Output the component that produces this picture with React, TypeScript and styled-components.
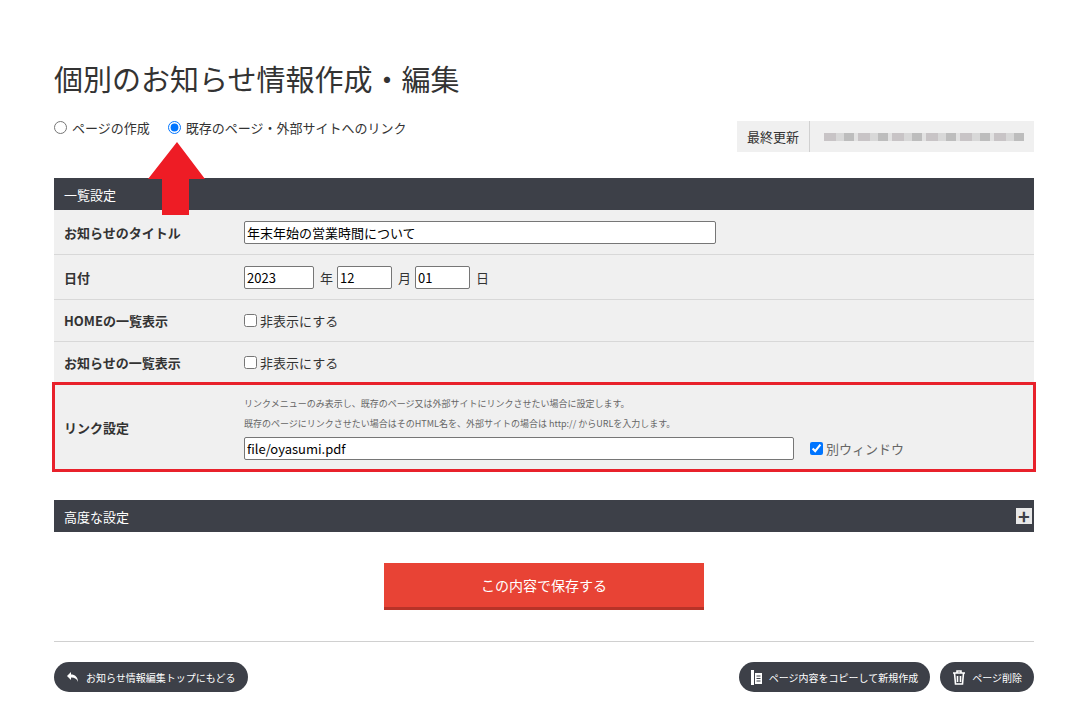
import React from 'react';
import styled, { createGlobalStyle } from 'styled-components';

const Global = createGlobalStyle`
  body { margin: 0; background: #fff; font-family: "Noto Sans CJK JP", "Noto Sans", sans-serif; color: #333; }
`;

const Page = styled.div`
  width: 980px;
  margin: 0 0 0 54px;
  padding: 56px 0 0 0;
  position: relative;
`;

const Title = styled.h1`
  font-size: 29px;
  font-weight: 400;
  margin: 0 0 16px 0;
  line-height: 44px;
  color: #333;
`;

const TopRow = styled.div`
  display: flex;
  justify-content: space-between;
  align-items: flex-start;
  height: 62px;
`;

const Radios = styled.div`
  display: flex;
  gap: 18px;
  font-size: 13px;
  padding-top: 2px;
  label { display: flex; align-items: center; gap: 3px; }
  input { margin: 0 2px 0 0; width: 13px; height: 13px; }
`;

const Updated = styled.div`
  display: flex;
  align-items: center;
  background: #f0f0f0;
  height: 31px;
  width: 297px;
  margin-top: 5px;
  font-size: 13px;
`;

const UpdatedLabel = styled.div`
  padding: 0 10px;
  border-right: 1px solid #d0d0d0;
  height: 100%;
  display: flex;
  align-items: center;
`;

const Blur = styled.div`
  margin-left: 14px;
  height: 8px;
  width: 200px;
  background: repeating-linear-gradient(90deg, #c8c4c6 0 12px, #d8d8d8 12px 20px, #bdbdbd 20px 30px, #e2e2e2 30px 34px);
  filter: blur(0.6px);
`;

const SectionHead = styled.div`
  background: #3d4048;
  color: #fff;
  font-size: 13px;
  height: 32px;
  display: flex;
  align-items: center;
  justify-content: space-between;
  padding: 0 2px 0 10px;
`;

const Row = styled.div<{ $h: number; $hl?: boolean }>`
  display: flex;
  align-items: center;
  background: #f0f0f0;
  min-height: ${p => p.$h}px;
  border-bottom: 1px solid #d8d8d8;
  box-sizing: border-box;
  ${p => p.$hl && `outline: 3px solid #e8212b; outline-offset: -1px; border-bottom: none;`}
`;

const Label = styled.div`
  width: 190px;
  box-sizing: border-box;
  padding-left: 10px;
  font-size: 13px;
  font-weight: 700;
  color: #333;
`;

const Field = styled.div`
  flex: 1;
  display: flex;
  align-items: center;
  gap: 4px;
  font-size: 13px;
`;

const TextInput = styled.input<{ $w: number }>`
  width: ${p => p.$w}px;
  height: 23px;
  box-sizing: border-box;
  border: 1px solid #767676;
  border-radius: 2px;
  font-size: 13px;
  font-family: inherit;
  padding: 0 2px;
  margin-right: 2px;
`;

const Check = styled.label`
  display: flex;
  align-items: center;
  gap: 3px;
  input { margin: 0; width: 13px; height: 13px; }
`;

const Notes = styled.div`
  flex: 1;
  display: flex;
  flex-direction: column;
  font-size: 9px;
  color: #666;
  gap: 7px;
  padding: 10px 0 8px;
`;

const Plus = styled.div`
  width: 16px;
  height: 16px;
  background: #e8e8e8;
  color: #3d4048;
  font-size: 20px;
  font-weight: 700;
  line-height: 16px;
  text-align: center;
`;

const SaveWrap = styled.div`
  display: flex;
  justify-content: center;
  padding: 31px 0 31px;
  border-bottom: 1px solid #d0d0d0;
`;

const Save = styled.button`
  width: 320px;
  height: 47px;
  background: #e84335;
  border: none;
  border-bottom: 3px solid #b73328;
  color: #fff;
  font-size: 14px;
  font-family: inherit;
`;

const Footer = styled.div`
  display: flex;
  justify-content: space-between;
  padding-top: 20px;
`;

const Pill = styled.button`
  height: 30px;
  border-radius: 15px;
  background: #3d4048;
  color: #fff;
  border: none;
  font-family: inherit;
  font-size: 10px;
  display: flex;
  align-items: center;
  gap: 6px;
  padding: 0 12px;
`;

const Arrow = styled.svg`
  position: absolute;
  left: 94px;
  top: 142px;
`;

export default function App() {
  return (
    <>
      <Global />
      <Page>
        <Title>個別のお知らせ情報作成・編集</Title>
        <TopRow>
          <Radios>
            <label><input type="radio" name="m" />ページの作成</label>
            <label><input type="radio" name="m" defaultChecked />既存のページ・外部サイトへのリンク</label>
          </Radios>
          <Updated>
            <UpdatedLabel>最終更新</UpdatedLabel>
            <Blur />
          </Updated>
        </TopRow>
        <SectionHead>一覧設定</SectionHead>
        <Row $h={45}>
          <Label>お知らせのタイトル</Label>
          <Field><TextInput $w={472} defaultValue="年末年始の営業時間について" /></Field>
        </Row>
        <Row $h={45}>
          <Label>日付</Label>
          <Field>
            <TextInput $w={70} defaultValue="2023" />年
            <TextInput $w={55} defaultValue="12" />月
            <TextInput $w={55} defaultValue="01" />日
          </Field>
        </Row>
        <Row $h={42}>
          <Label>HOMEの一覧表示</Label>
          <Field><Check><input type="checkbox" />非表示にする</Check></Field>
        </Row>
        <Row $h={42}>
          <Label>お知らせの一覧表示</Label>
          <Field><Check><input type="checkbox" />非表示にする</Check></Field>
        </Row>
        <Row $h={86} $hl>
          <Label>リンク設定</Label>
          <Notes>
            <span>リンクメニューのみ表示し、既存のページ又は外部サイトにリンクさせたい場合に設定します。</span>
            <span>既存のページにリンクさせたい場合はそのHTML名を、外部サイトの場合は http:// からURLを入力します。</span>
            <Field>
              <TextInput $w={550} defaultValue="file/oyasumi.pdf" />
              <Check style={{ marginLeft: 10 }}><input type="checkbox" defaultChecked />別ウィンドウ</Check>
            </Field>
          </Notes>
        </Row>
        <div style={{ height: 30 }} />
        <SectionHead>高度な設定<Plus>+</Plus></SectionHead>
        <SaveWrap><Save>この内容で保存する</Save></SaveWrap>
        <Footer>
          <Pill>
            <svg width="14" height="12" viewBox="0 0 14 12"><path d="M5 1 L1 5 L5 9 V6.5 C9 6.5 11 8 12 11 C12 6 9 3.5 5 3.5 Z" fill="#fff" /></svg>
            お知らせ情報編集トップにもどる
          </Pill>
          <div style={{ display: 'flex', gap: 10 }}>
            <Pill>
              <svg width="12" height="15" viewBox="0 0 12 15"><rect x="0" y="0" width="3" height="15" fill="#fff" /><rect x="4" y="3" width="7" height="11" fill="#fff" /><path d="M5.5 6h4M5.5 8.5h4M5.5 11h4" stroke="#3d4048" /></svg>
              ページ内容をコピーして新規作成
            </Pill>
            <Pill>
              <svg width="14" height="15" viewBox="0 0 14 15" fill="none" stroke="#fff" strokeWidth="1.6"><path d="M1 3h12M5 3V1h4v2M2.5 3l1 11h7l1-11M5.5 6v6M8.5 6v6" /></svg>
              ページ削除
            </Pill>
          </div>
        </Footer>
        <Arrow width="60" height="75" viewBox="0 0 60 75">
          <path d="M29 0 L57 37 L41 37 L41 73 L14 73 L14 37 L0 37 Z" fill="#ee1c25" />
        </Arrow>
      </Page>
    </>
  );
}
